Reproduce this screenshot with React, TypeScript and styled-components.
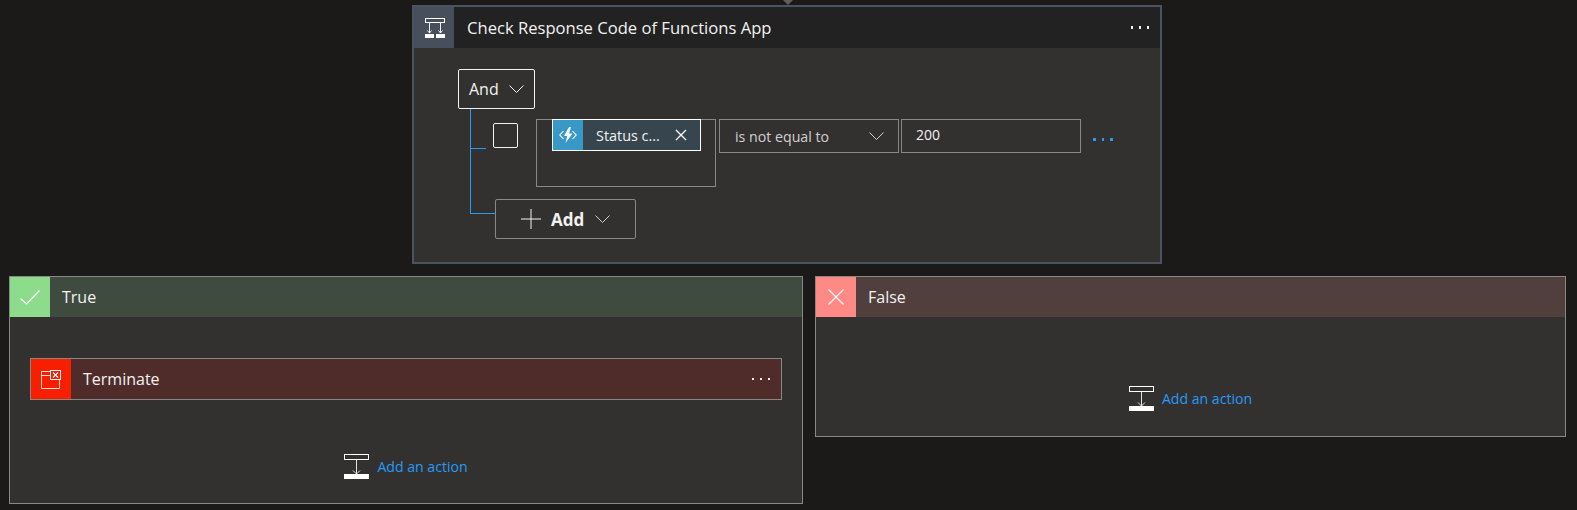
import React from "react";
import styled, { createGlobalStyle } from "styled-components";

const Global = createGlobalStyle`
  html, body { margin: 0; padding: 0; background: #1b1a19; }
  body { width: 1577px; height: 510px; overflow: hidden; font-family: "Open Sans", "Noto Sans", "Liberation Sans", sans-serif; color: #f3f2f1; }
  * { box-sizing: border-box; }
`;

const Page = styled.div`
  display: flex;
  flex-direction: column;
  height: 510px;
`;

const TopArea = styled.div`
  position: relative;
  padding: 5px 0 0 412px;
`;

const Pointer = styled.div`
  position: absolute;
  left: 783px;
  top: 0;
  width: 0;
  height: 0;
  border-left: 5px solid transparent;
  border-right: 5px solid transparent;
  border-top: 5px solid #605e5c;
`;

const MainCard = styled.section`
  width: 750px;
  height: 259px;
  border: 2px solid #4a5362;
  background: #323130;
  display: flex;
  flex-direction: column;
`;

const CardHeader = styled.header`
  height: 41px;
  flex: none;
  background: #222222;
  display: flex;
  align-items: center;
`;

const HeaderIcon = styled.div`
  width: 40px;
  height: 41px;
  flex: none;
  background: #474f5c;
  display: flex;
  align-items: center;
  justify-content: center;
  padding-left: 2px;
`;

const CardTitle = styled.div`
  flex: 1;
  padding-left: 13px;
  font-size: 16.6px;
  color: #f3f2f1;
`;

const More = styled.div<{ $blue?: boolean }>`
  display: flex;
  gap: 5.5px;
  align-items: center;
  span {
    width: 2.5px;
    height: 2.5px;
    background: ${(p) => (p.$blue ? "#2899f5" : "#f3f2f1")};
  }
`;

const HeaderMore = styled(More)`
  margin-right: 11px;
`;

const CardBody = styled.div`
  padding: 21px 0 0 44px;
`;

const AndButton = styled.div`
  width: 77px;
  height: 40px;
  border: 1px solid #f3f2f1;
  border-radius: 2px;
  display: flex;
  align-items: center;
  gap: 10px;
  padding-left: 10px;
  font-size: 16px;
`;

const Tree = styled.div`
  position: relative;
  margin-left: 12px;
  &::before {
    content: "";
    position: absolute;
    left: 0;
    top: 0;
    width: 1px;
    height: 104px;
    background: #2899f5;
  }
`;

const ConditionRow = styled.div`
  display: flex;
  align-items: flex-start;
  padding-top: 10px;
`;

const Stub = styled.div<{ $w: number; $top: number }>`
  width: ${(p) => p.$w}px;
  height: 1px;
  flex: none;
  margin-top: ${(p) => p.$top}px;
  background: #2899f5;
`;

const Check = styled.div`
  width: 25px;
  height: 25px;
  margin: 4px 0 0 7px;
  flex: none;
  border: 1px solid #f3f2f1;
  border-radius: 2px;
`;

const TokenField = styled.div`
  width: 180px;
  height: 68px;
  margin-left: 18px;
  flex: none;
  border: 1px solid #8a8886;
  padding-left: 15px;
`;

const Token = styled.div`
  width: 149px;
  height: 32px;
  margin-top: -1px;
  border: 1px solid #ffffff;
  background: #36454e;
  display: flex;
  align-items: center;
`;

const TokenIcon = styled.div`
  width: 30px;
  height: 30px;
  flex: none;
  background: #3999c6;
  display: flex;
  align-items: center;
  justify-content: center;
`;

const TokenText = styled.div`
  flex: 1;
  padding-left: 13px;
  font-size: 14.4px;
  white-space: nowrap;
`;

const TokenClose = styled.div`
  margin-right: 13px;
  display: flex;
`;

const Select = styled.div`
  width: 180px;
  height: 34px;
  margin-left: 3px;
  flex: none;
  border: 1px solid #8a8886;
  display: flex;
  align-items: center;
  justify-content: space-between;
  padding: 0 14px 0 15px;
  font-size: 14.2px;
  color: #d2d0ce;
`;

const ValueInput = styled.div`
  width: 180px;
  height: 34px;
  margin-left: 2px;
  flex: none;
  border: 1px solid #8a8886;
  display: flex;
  align-items: center;
  padding: 0 0 3px 14px;
  font-size: 14px;
`;

const RowMore = styled(More)`
  margin: 19px 0 0 12px;
  gap: 6px;
`;

const AddRow = styled.div`
  display: flex;
  align-items: flex-start;
  padding-top: 12px;
`;

const AddButton = styled.div`
  width: 141px;
  height: 40px;
  flex: none;
  border: 1px solid #8a8886;
  border-radius: 2px;
  display: flex;
  align-items: center;
  padding-left: 25px;
  font-size: 17px;
  font-weight: 700;
`;

const AddLabel = styled.span`
  margin: 0 11px 0 10px;
`;

const Branches = styled.div`
  display: flex;
  align-items: flex-start;
  margin-top: 12px;
  padding-left: 9px;
  gap: 12px;
`;

const BranchCard = styled.section<{ $w: number; $h: number }>`
  width: ${(p) => p.$w}px;
  height: ${(p) => p.$h}px;
  border: 1px solid #8a8886;
  background: #323130;
  display: flex;
  flex-direction: column;
`;

const BranchHeader = styled.header<{ $bg: string }>`
  height: 40px;
  flex: none;
  background: ${(p) => p.$bg};
  display: flex;
  align-items: center;
`;

const BranchIcon = styled.div<{ $bg: string }>`
  width: 40px;
  height: 40px;
  flex: none;
  background: ${(p) => p.$bg};
  display: flex;
  align-items: center;
  justify-content: center;
`;

const BranchTitle = styled.div`
  padding-left: 12px;
  font-size: 16px;
`;

const BranchBody = styled.div`
  flex: 1;
  display: flex;
  flex-direction: column;
`;

const Action = styled.div`
  margin: 41px 20px 0;
  height: 42px;
  border: 1px solid #8a8886;
  background: #4f2c29;
  display: flex;
  align-items: center;
`;

const ActionIcon = styled.div`
  width: 40px;
  height: 40px;
  flex: none;
  background: #f81e00;
  display: flex;
  align-items: center;
  justify-content: center;
`;

const ActionTitle = styled.div`
  flex: 1;
  padding-left: 12px;
  font-size: 16px;
`;

const ActionMore = styled(More)`
  margin-right: 11px;
`;

const AddAction = styled.div<{ $top: number; $shift?: number }>`
  display: flex;
  align-items: center;
  justify-content: center;
  gap: 8px;
  margin-top: ${(p) => p.$top}px;
  color: #2899f5;
  font-size: 14.1px;
`;

const Chevron = ({ size = 15, color = "#f3f2f1" }: { size?: number; color?: string }) => (
  <svg width={size} height={(size + 1) / 2} viewBox="0 0 15 8" fill="none" stroke={color} strokeWidth="1">
    <path d="M0.500 0.500l7 7 7-7" />
  </svg>
);

const ConditionIcon = () => (
  <svg width="20" height="20" viewBox="0 0 20 20" fill="none" stroke="#fff">
    <rect x="0.5" y="0.5" width="19" height="4" />
    <path d="M4.500 5v10M2.500 12.500l2 2.500 2-2.500M15.500 5v10M13.500 12.500l2 2.500 2-2.500" strokeWidth="0.9" />
    <rect x="0" y="16" width="9" height="4" fill="#fff" stroke="none" />
    <rect x="11" y="16" width="9" height="4" fill="#fff" stroke="none" />
  </svg>
);

const FunctionIcon = () => (
  <svg width="18" height="16" viewBox="0 0 18 16" fill="none">
    <path d="M4.500 4L0.800 8l3.700 4M13.500 4l3.700 4-3.700 4" stroke="#fff" strokeWidth="1.100" />
    <path d="M10 0L5 9h3.200L6.500 16 13.500 6.500h-3.500L12 0z" fill="#fff" />
  </svg>
);

const AddActionIcon = () => (
  <svg width="25" height="25" viewBox="0 0 25 25" fill="none" stroke="#fff">
    <rect x="0.5" y="0.500" width="24" height="5" />
    <path d="M12.500 6v14M9 16.500l3.500 3.500 3.500-3.500" strokeWidth="1" strokeOpacity="0.85" />
    <rect x="0" y="20" width="25" height="5" fill="#fff" stroke="none" />
  </svg>
);

const TerminateIcon = () => (
  <svg width="20" height="19" viewBox="0 0 20 19" fill="none" stroke="#fff">
    <path d="M9 1.500H0.500v17h18V10" strokeOpacity="0.85" />
    <path d="M0.500 5.500H9" strokeOpacity="0.85" />
    <rect x="9" y="0" width="11" height="10" fill="#fff" stroke="none" />
    <rect x="10" y="1" width="9" height="8" fill="#f81e00" stroke="none" />
    <path d="M12 2.500l5 5M17 2.500l-5 5" strokeWidth="1.200" />
  </svg>
);

export default function App() {
  return (
    <Page>
      <Global />
      <TopArea>
        <Pointer />
        <MainCard>
          <CardHeader>
            <HeaderIcon>
              <ConditionIcon />
            </HeaderIcon>
            <CardTitle>Check Response Code of Functions App</CardTitle>
            <HeaderMore>
              <span />
              <span />
              <span />
            </HeaderMore>
          </CardHeader>
          <CardBody>
            <AndButton>
              And
              <Chevron />
            </AndButton>
            <Tree>
              <ConditionRow>
                <Stub $w={16} $top={29} />
                <Check />
                <TokenField>
                  <Token>
                    <TokenIcon>
                      <FunctionIcon />
                    </TokenIcon>
                    <TokenText>Status c...</TokenText>
                    <TokenClose>
                      <svg width="12" height="12" viewBox="0 0 12 12" stroke="#fff" strokeWidth="1.400">
                        <path d="M1 1l10 10M11 1L1 11" />
                      </svg>
                    </TokenClose>
                  </Token>
                </TokenField>
                <Select>
                  is not equal to
                  <Chevron color="#d2d0ce" />
                </Select>
                <ValueInput>200</ValueInput>
                <RowMore $blue>
                  <span />
                  <span />
                  <span />
                </RowMore>
              </ConditionRow>
              <AddRow>
                <Stub $w={25} $top={14} />
                <AddButton>
                  <svg width="20" height="20" viewBox="0 0 20 20" stroke="#f3f2f1" strokeWidth="1">
                    <path d="M10 0v20M0 10h20" />
                  </svg>
                  <AddLabel>Add</AddLabel>
                  <Chevron color="#d2d0ce" />
                </AddButton>
              </AddRow>
            </Tree>
          </CardBody>
        </MainCard>
      </TopArea>
      <Branches>
        <BranchCard $w={794} $h={228}>
          <BranchHeader $bg="#3e4b3e">
            <BranchIcon $bg="#8cdc8c">
              <svg width="20" height="15" viewBox="0 0 20 15" fill="none" stroke="#fff" strokeWidth="1.200">
                <path d="M0.500 8.500L6.500 14 19.500 0.500" />
              </svg>
            </BranchIcon>
            <BranchTitle>True</BranchTitle>
          </BranchHeader>
          <BranchBody>
            <Action>
              <ActionIcon>
                <TerminateIcon />
              </ActionIcon>
              <ActionTitle>Terminate</ActionTitle>
              <ActionMore>
                <span />
                <span />
                <span />
              </ActionMore>
            </Action>
            <AddAction $top={54}>
              <AddActionIcon />
              Add an action
            </AddAction>
          </BranchBody>
        </BranchCard>
        <BranchCard $w={751} $h={161}>
          <BranchHeader $bg="#503f3d">
            <BranchIcon $bg="#ff8a85">
              <svg width="16" height="16" viewBox="0 0 16 16" fill="none" stroke="#fff" strokeWidth="1.100">
                <path d="M0.500 0.500l15 15M15.500 0.500l-15 15" />
              </svg>
            </BranchIcon>
            <BranchTitle>False</BranchTitle>
          </BranchHeader>
          <BranchBody>
            <AddAction $top={69}>
              <AddActionIcon />
              Add an action
            </AddAction>
          </BranchBody>
        </BranchCard>
      </Branches>
    </Page>
  );
}
